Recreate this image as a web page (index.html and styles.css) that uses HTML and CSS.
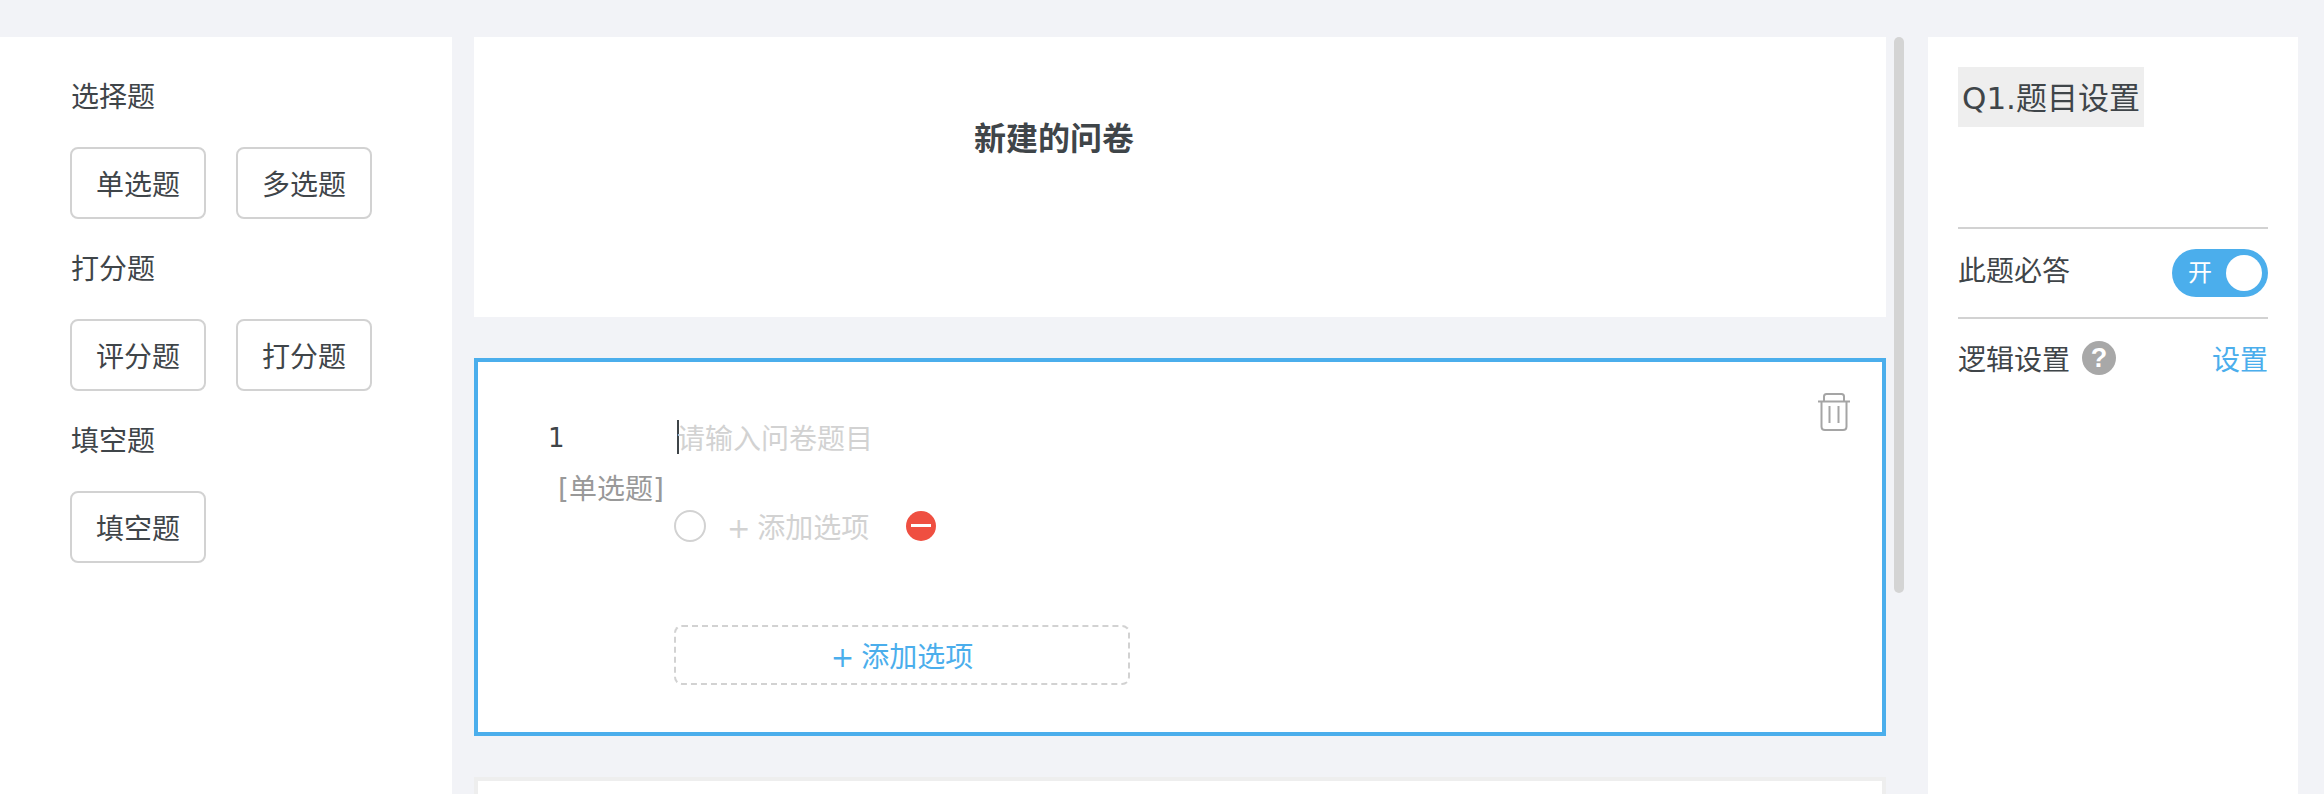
FILE: index.html
```html
<!DOCTYPE html>
<html lang="zh-CN">
<head>
<meta charset="utf-8">
<title>新建的问卷</title>
<link rel="stylesheet" href="styles.css">
</head>
<body>
<div class="page">
  <aside class="palette">
    <h3 class="group-title">选择题</h3>
    <div class="btn-row">
      <button class="type-btn">单选题</button>
      <button class="type-btn">多选题</button>
    </div>
    <h3 class="group-title">打分题</h3>
    <div class="btn-row">
      <button class="type-btn">评分题</button>
      <button class="type-btn">打分题</button>
    </div>
    <h3 class="group-title">填空题</h3>
    <div class="btn-row">
      <button class="type-btn">填空题</button>
    </div>
  </aside>

  <main class="editor">
    <div class="scroll-thumb"></div>
    <section class="title-card">
      <h1 class="survey-title">新建的问卷</h1>
    </section>
    <section class="question active">
      <svg class="trash" width="32" height="38" viewBox="0 0 32 38" fill="none" stroke="#a5a5a5" stroke-width="2">
        <path d="M0 8.500H32"/>
        <path d="M6 8V3.500Q6 1 8.500 1H23.500Q26 1 26 3.500V8"/>
        <path d="M3.500 9V33.500Q3.500 37 7 37H25Q28.500 37 28.500 33.500V9"/>
        <path d="M11.500 13V30M20.500 13V30"/>
      </svg>
      <div class="q-meta">
        <div class="q-num">1</div>
        <div class="q-type">[单选题]</div>
      </div>
      <div class="q-body">
        <div class="q-title"><span class="caret"></span>请输入问卷题目</div>
        <div class="option">
          <span class="radio"></span>
          <span class="option-text">+ 添加选项</span>
          <span class="remove"></span>
        </div>
        <button class="add-option">+ 添加选项</button>
      </div>
    </section>
    <section class="question next"></section>
  </main>

  <aside class="settings">
    <div class="settings-head"><span class="settings-title">Q1.题目设置</span></div>
    <div class="setting-row required">
      <span class="row-label">此题必答</span>
      <span class="toggle"><span class="toggle-label">开</span><span class="knob"></span></span>
    </div>
    <div class="setting-row logic">
      <span class="logic-label">逻辑设置<span class="help">?</span></span>
      <a class="link">设置</a>
    </div>
  </aside>
</div>
</body>
</html>
```
FILE: styles.css
```css
* { box-sizing: border-box; }
html, body { margin: 0; height: 100%; overflow: hidden; }
body {
  background: #f2f3f7;
  color: #3f4549;
  font-family: "DejaVu Sans", "Noto Sans CJK SC", sans-serif;
  font-size: 28px;
  font-weight: 400;
}
.page { display: flex; height: 794px; padding-top: 37px; }

.palette { width: 452px; background: #fff; padding: 39px 0 0 71px; }
.group-title { margin: 0; font-size: 28px; font-weight: 400; line-height: 44px; }
.btn-row { display: flex; gap: 30px; margin: 27px 0 29px -1px; }
.type-btn {
  width: 136px; height: 72px; padding: 0;
  background: #fff; border: 2px solid #d2d2d2; border-radius: 8px;
  color: #3f4549; font: inherit;
}

.editor { position: relative; width: 1430px; margin-left: 22px; padding-right: 18px; overflow: hidden; }
.scroll-thumb { position: absolute; top: 0; right: 0; width: 10px; height: 556px; background: #d4d4d4; border-radius: 5px; }
.title-card { height: 280px; background: #fff; padding: 80px 0 0 500px; }
.survey-title { margin: 0; font-size: 32px; font-weight: 700; line-height: 44px; }

.question { position: relative; display: flex; background: #fff; }
.question.active { height: 378px; margin-top: 41px; border: 4px solid #4baeec; }
.question.next { height: 100px; margin-top: 41px; border: 4px solid #eeeeee; }
.trash { position: absolute; top: 31px; right: 32px; }

.q-meta { width: 196px; padding: 54px 0 0 70px; }
.q-num { font-size: 26px; line-height: 44px; }
.q-type { margin: 8px 0 0 10px; color: #999; line-height: 44px; white-space: nowrap; }

.q-body { padding-top: 53px; width: 456px; }
.q-title { display: flex; align-items: center; height: 44px; margin-left: 3px; color: #d2d2d2; }
.caret { width: 2px; height: 34px; margin-right: -2px; background: #3f4549; }
.option { display: flex; align-items: center; height: 44px; margin-top: 45px; color: #d2d2d2; }
.radio { width: 32px; height: 32px; border: 2px solid #d2d2d2; border-radius: 50%; margin-right: 21px; }
.option-text { width: 179px; word-spacing: -2px; }
.remove { position: relative; width: 30px; height: 30px; background: #ef4f41; border-radius: 50%; }
.remove::after { content: ""; position: absolute; left: 5px; right: 5px; top: 13px; height: 3px; background: #fff; }
.add-option {
  display: block; width: 456px; height: 60px; margin-top: 77px; padding: 0;
  background: #fff; border: 2px dashed #d2d2d2; border-radius: 8px;
  color: #4baeec; font: inherit; word-spacing: -2px;
}

.settings { width: 370px; margin-left: 24px; background: #fff; padding: 30px; }
.settings-head { height: 162px; border-bottom: 2px solid #d2d2d2; }
.settings-title { display: inline-block; height: 60px; padding: 0 4px; background: #eeeeee; font-size: 31px; line-height: 62px; white-space: nowrap; }
.setting-row { display: flex; align-items: center; justify-content: space-between; }
.required { height: 90px; border-bottom: 2px solid #d2d2d2; }
.row-label { margin-bottom: 8px; }
.logic { height: 78px; }
.toggle { display: flex; align-items: center; justify-content: space-between; width: 96px; height: 48px; padding: 0 6px 0 16px; background: #4baeec; border-radius: 24px; color: #fff; font-size: 24px; }
.toggle-label { margin-bottom: 6px; }
.knob { width: 36px; height: 36px; background: #fff; border-radius: 50%; }
.logic-label { display: flex; align-items: center; }
.help { display: inline-flex; align-items: center; justify-content: center; width: 34px; height: 34px; margin-left: 12px; background: #a8a8a8; border-radius: 50%; color: #fff; font-family: "Liberation Sans", sans-serif; font-size: 27px; font-weight: 700; }
.link { color: #4baeec; }
```
